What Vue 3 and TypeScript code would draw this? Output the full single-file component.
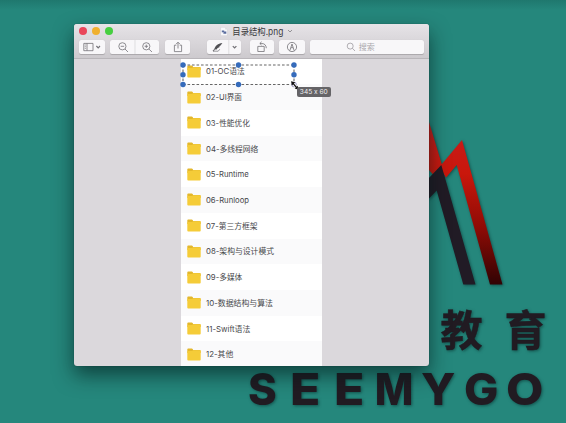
<script setup lang="ts">
interface Folder {
  name: string
  width: number
}

interface Letter {
  char: string
  x: number
  stretch: number
}

const letters: Letter[] = [
  { char: 'S', x: 248, stretch: 0.99 },
  { char: 'E', x: 290, stretch: 1.13 },
  { char: 'E', x: 334, stretch: 1.13 },
  { char: 'M', x: 374.7, stretch: 0.93 },
  { char: 'Y', x: 421.1, stretch: 1.04 },
  { char: 'G', x: 464, stretch: 1.04 },
  { char: 'O', x: 506, stretch: 1.1 },
]

const folders: Folder[] = [
  { name: '01-OC语法', width: 38.7 },
  { name: '02-UI界面', width: 36 },
  { name: '03-性能优化', width: 44 },
  { name: '04-多线程网络', width: 52.3 },
  { name: '05-Runtime', width: 42.7 },
  { name: '06-Runloop', width: 43 },
  { name: '07-第三方框架', width: 51.5 },
  { name: '08-架构与设计模式', width: 68 },
  { name: '09-多媒体', width: 36.3 },
  { name: '10-数据结构与算法', width: 67 },
  { name: '11-Swift语法', width: 44.3 },
  { name: '12-其他', width: 27.3 },
]

const handles: [number, number][] = [
  [4, 4], [59.5, 4], [115, 4],
  [4, 13.8], [115, 13.8],
  [4, 23.5], [59.5, 23.5],
]
</script>

<template>
  <main class="desktop">
    <svg class="brand" viewBox="0 0 566 423" width="566" height="423">
      <defs>
        <linearGradient id="red" x1="0" y1="126" x2="0" y2="285" gradientUnits="userSpaceOnUse">
          <stop offset="0" stop-color="#c91d1b" />
          <stop offset=".3" stop-color="#c9170c" />
          <stop offset=".65" stop-color="#8c0b05" />
          <stop offset="1" stop-color="#300304" />
        </linearGradient>
      </defs>
      <g class="mark">
        <path fill="url(#red)" d="M429 122 442 165 434.5 176 429 170ZM462 140 502.5 284.5H490L456.7 165 446 177.5 439.5 167Z" />
        <path fill="#211b25" d="M441.3 165 475.5 284.5H463.3L436.7 190.5 428 199.5V179Z" />
      </g>
      <text class="cn" x="440.6 504.6" y="346">教育</text>
      <text
        v-for="(letter, i) in letters"
        :key="i"
        class="en"
        :transform="`translate(${letter.x} 405) scale(${letter.stretch} 1)`"
      >{{ letter.char }}</text>
    </svg>

    <section class="window">
      <header class="chrome">
        <div class="titlebar">
          <div class="lights"><i class="red" /><i class="yellow" /><i class="green" /></div>
          <svg class="doc" viewBox="0 0 8 9" width="8" height="9">
            <path d="M.6.3H5.2L7.4 2.5V8.7H.6Z" fill="#f8f8fa" stroke="#c8c6cc" stroke-width=".4" />
            <path d="M5.2.3V2.5H7.4" fill="#ddd" />
            <path d="M1.8 3.4H4.2V5H1.8ZM3.4 4.6H6.3V6.8H3.4Z" fill="#596b9d" />
            <path d="M1.8 5.4H3.4" stroke="#9aa6c4" stroke-width=".6" />
          </svg>
          <svg class="title" viewBox="0 0 53 13" width="53" height="13">
            <text x="0.3" y="10" textLength="51" lengthAdjust="spacingAndGlyphs">目录结构.png</text>
          </svg>
          <svg class="caret" viewBox="0 0 6 4" width="6" height="4"><path d="M1 1 3 3 5 1" /></svg>
        </div>

        <div class="toolbar">
          <button class="btn view">
            <svg viewBox="0 0 26 14" width="26" height="14">
              <path d="M4.8 3.4H14V10.7H4.8ZM8 3.4V10.7" />
              <path d="M5.8 5H7M5.8 6.7H7M5.8 8.4H7" stroke-width=".6" />
              <path d="M17.4 6 19.2 7.8 21 6" stroke-width="1.2" />
            </svg>
          </button>
          <button class="btn zoom">
            <svg viewBox="0 0 50 14" width="50" height="14">
              <circle cx="12.4" cy="6.3" r="3.6" /><path d="M15 9 18 12M10.7 6.3H14.1" />
              <path d="M25 0V14" class="split" />
              <circle cx="36.3" cy="6.3" r="3.6" /><path d="M38.9 9 42 12M34.6 6.3H38M36.3 4.6V8" />
            </svg>
          </button>
          <button class="btn share">
            <svg viewBox="0 0 26 14" width="26" height="14">
              <path d="M11.3 5.2H9.4V11.6H16.6V5.2H14.7M13 8.5V2.4M11 4.2 13 2.2 15 4.2" />
            </svg>
          </button>
          <button class="btn pen">
            <svg viewBox="0 0 34 14" width="34" height="14">
              <path d="M7.2 9.2C8.6 5.8 10.6 3.4 15.4 3L13.6 5.4 12.6 6.1 12.4 7.2 10.6 8 9.6 9.6Z" fill="#505054" stroke="none" />
              <path d="M6 11.2H11.2L12.8 9.2" stroke-width=".7" />
              <path d="M8 9 6 11.2" stroke-width="1.1" />
              <path d="M21.8 0V14" class="split" />
              <path d="M25.8 6.1 27.6 7.9 29.4 6.1" stroke-width="1.3" />
            </svg>
          </button>
          <button class="btn rotate">
            <svg viewBox="0 0 24 14" width="24" height="14">
              <path d="M7.8 6.4H14.2V11.5H7.8ZM10 3.5H11.8C14.5 3.5 16.2 5.2 16.3 8.2M11.6 1.8 9.8 3.5 11.6 5.1" />
            </svg>
          </button>
          <button class="btn markup">
            <svg viewBox="0 0 26 14" width="26" height="14">
              <circle cx="13" cy="7" r="4.6" />
              <path d="M10.8 10.7 13 4 15.2 10.7M12 7.7H14" />
            </svg>
          </button>
          <div class="search">
            <svg viewBox="0 0 10 10" width="10" height="10"><circle cx="4.2" cy="4.1" r="3" /><path d="M6.4 6.3 9 9" /></svg>
            <span>搜索</span>
          </div>
        </div>
      </header>

      <div class="canvas">
        <div class="page">
          <div v-for="folder in folders" :key="folder.name" class="row">
            <svg class="folder" viewBox="0 0 14 13" width="14" height="13">
              <path d="M.3 1.3Q.3.4 1.2.4H4.7Q5.4.4 5.8 1.2L6.2 2H12.8Q13.7 2 13.7 2.9V5H.3Z" fill="#e3b72c" />
              <path d="M.3 4Q.3 3 1.2 3H5.2L6.2 2.2H12.8Q13.7 2.2 13.7 3.1V11.5Q13.7 12.4 12.8 12.4H1.2Q.3 12.4.3 11.5Z" fill="#f5cc38" />
            </svg>
            <svg class="label" viewBox="0 0 72 12" width="72" height="12">
              <text x="0" y="9" :textLength="folder.width" lengthAdjust="spacingAndGlyphs">{{ folder.name }}</text>
            </svg>
          </div>
        </div>
      </div>
    </section>

    <svg class="selection" viewBox="0 0 122 32" width="122" height="32">
      <path d="M4 4H115M4 23.5H115M4 4V23.5M115 4V23.5" class="dashes" />
      <circle v-for="([x, y], i) in handles" :key="i" :cx="x" :cy="y" r="2.7" />
      <circle cx="115" cy="23.5" r="2.4" class="ghost" />
      <path d="M113.5 22 118.3 27.2" stroke="#fff" stroke-width="2.2" />
      <path d="M113.8 22.2 118 27" stroke="#111" stroke-width="1.2" />
      <path d="M112 20.3 116.2 21.3 113 24.5ZM119.6 28.8 115.7 27.6 118.7 24.7Z" fill="#111" />
    </svg>
    <div class="size-tip">345 x 60</div>
  </main>
</template>

<style>
body { background: #25877c; overflow: hidden; }
</style>

<style scoped>
.desktop {
  position: relative;
  width: 566px;
  height: 423px;
  overflow: hidden;
  background: linear-gradient(#1f786e, #25877c 10px);
  font-family: Inter, "Noto Sans CJK SC", sans-serif;
  font-feature-settings: "calt" 0;
}
.brand { position: absolute; left: 0; top: 0; filter: drop-shadow(1.5px 1.5px 1.5px rgba(0, 30, 30, .5)); }
.brand text { fill: #211b22; }
.cn { font: 700 42px "Noto Sans CJK SC", sans-serif; stroke: #211b22; stroke-width: .5px; }
.en { font: 800 44px Inter, sans-serif; }
.window {
  position: absolute;
  left: 74.3px;
  top: 24.3px;
  width: 355px;
  height: 341.5px;
  display: flex;
  flex-direction: column;
  overflow: hidden;
  border-radius: 3px;
  background: #dbd8dc;
  box-shadow: 0 0 1px rgba(0, 0, 0, .5), 0 9px 20px rgba(0, 25, 25, .62);
}
.chrome {
  flex: none;
  height: 35.2px;
  box-sizing: border-box;
  border-bottom: 1px solid #b9b6ba;
  background: linear-gradient(#e6e3e7, #cdcace);
}
.titlebar { display: flex; align-items: center; height: 13.7px; padding-left: 4.3px; }
.lights { display: flex; gap: 4.7px; width: 141.3px; }
.lights i { width: 8.3px; height: 8.3px; border-radius: 50%; }
.red { background: #e9465a; }
.yellow { background: #f0b02f; }
.green { background: #46cf40; }
.title { margin-left: 4.2px; overflow: visible; }
.title text { font-size: 9.2px; fill: #3a3a3d; }
.caret { margin-left: 1.6px; fill: none; stroke: #8b898d; stroke-width: .9; }
.toolbar { display: flex; padding: 2px 0 0 4.8px; }
.btn, .search {
  height: 13.8px;
  padding: 0;
  border: 0;
  border-radius: 2px;
  background: #f8f7f9;
  box-shadow: 0 .5px .7px rgba(0, 0, 0, .18);
}
.btn { display: flex; flex: none; overflow: hidden; }
.btn svg { flex: none; fill: none; stroke: #737277; stroke-width: .8; }
.btn .split { stroke: #d4d2d6; stroke-width: .7; }
.view { width: 25.8px; margin-right: 5.2px; }
.zoom { width: 49.4px; margin-right: 5.3px; }
.share { width: 25.7px; margin-right: 17px; }
.pen { width: 34px; margin-right: 8.3px; }
.rotate { width: 24px; margin-right: 5.7px; }
.markup { width: 25.6px; margin-right: 5.4px; }
.search {
  display: flex;
  align-items: center;
  justify-content: center;
  gap: 2.5px;
  width: 113.4px;
  box-sizing: border-box;
  padding-right: 13px;
  color: #aaa8ad;
  font-size: 8px;
}
.search svg { fill: none; stroke: #9d9ba0; stroke-width: .8; }
.canvas { flex: 1; display: flex; justify-content: center; overflow: hidden; }
.page { width: 141px; margin-top: -1px; }
.row { display: flex; align-items: center; height: 25.73px; padding-left: 5.6px; box-sizing: border-box; background: #fff; }
.row:nth-child(even) { background: #fafafb; }
.label { margin-left: 5.6px; overflow: visible; }
.label text { font-size: 7.8px; fill: #48484b; }
.selection { position: absolute; left: 179px; top: 60.5px; fill: #356bbb; }
.dashes { fill: none; stroke: #666; stroke-width: 1.1; stroke-dasharray: 2.6 1.9; }
.ghost { fill: #e8e7f3; stroke: #8884b5; stroke-width: .7; }
.size-tip {
  position: absolute;
  left: 297px;
  top: 87px;
  width: 33.6px;
  height: 10px;
  border-radius: 2px;
  background: #656467;
  color: #f0f0f0;
  font-size: 6.6px;
  line-height: 10px;
  text-align: center;
  white-space: nowrap;
}
</style>
